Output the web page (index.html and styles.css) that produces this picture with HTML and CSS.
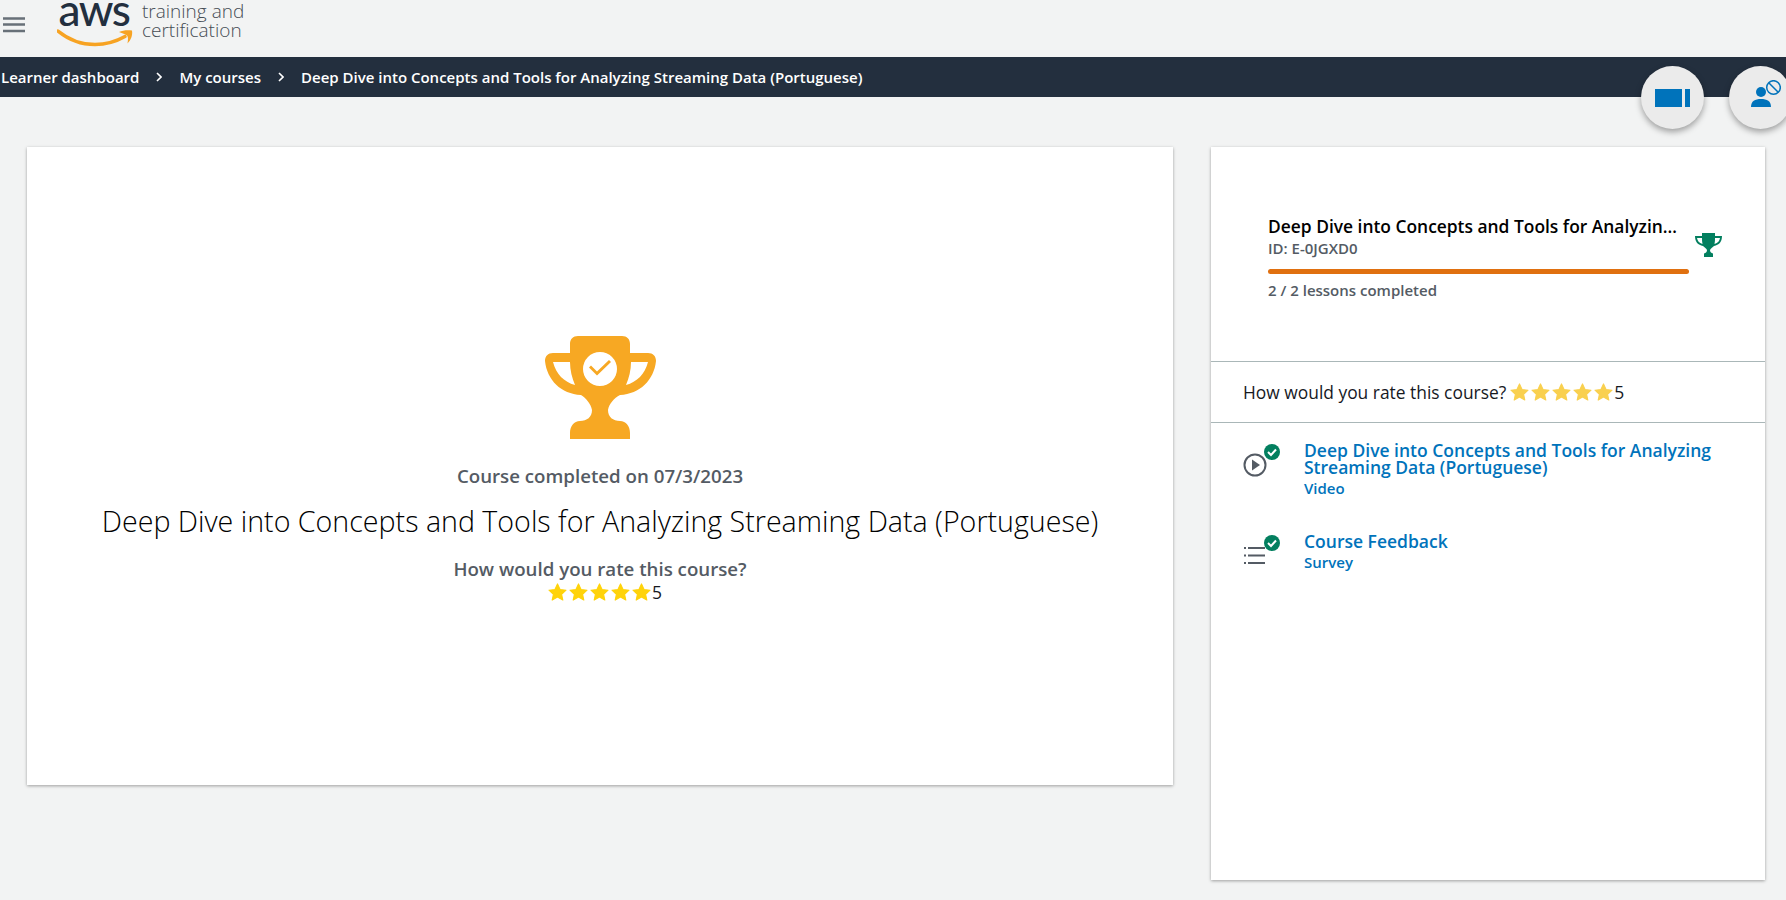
FILE: index.html
```html
<!DOCTYPE html>
<html lang="en">
<head>
    <meta charset="UTF-8">
    <title>Course completed</title>
    <link rel="stylesheet" href="styles.css">
</head>
<body>

<!-- star shape used by the ratings -->
<svg class="defs" width="0" height="0">
    <symbol id="star" viewBox="0 0 20 19">
        <path d="M10 1L12.700 6.900L19 7.600L14.300 11.900L15.600 18L10 14.900L4.400 18L5.700 11.900L1 7.600L7.300 6.900Z" stroke-width="1.200" stroke-linejoin="round"/>
    </symbol>
</svg>

<!-- top bar with logo -->
<header class="topbar">
    <svg class="menu-icon" viewBox="0 0 22 16" width="22" height="16">
        <path d="M0 1.500H22M0 7.500H22M0 14H22" stroke="#687078" stroke-width="2.400"/>
    </svg>
    <div class="logo">
        <span class="logo-word">aws</span>
        <svg class="logo-smile" viewBox="0 0 76 18" width="76" height="18">
            <path d="M1 2C12 11 25 15.500 38 15.500C50 15.500 60 12 68 7.500" fill="none" stroke="#f7a323" stroke-width="3.400" stroke-linecap="round"/>
            <path d="M62 3C66 1 71 .8 75 1.500C75.800 6 74 11 70.500 14.500C71 11 71.500 8 70 6.500C67.500 5 64.500 4 62 3Z" fill="#f7a323"/>
        </svg>
    </div>
    <div class="logo-text">training and<br>certification</div>
</header>

<!-- breadcrumb -->
<nav class="crumbs">
    <a>Learner dashboard</a>
    <svg class="chev" viewBox="0 0 6 10" width="6" height="10"><path d="M1 1L5 5L1 9" fill="none" stroke="#fff" stroke-width="1.600"/></svg>
    <a>My courses</a>
    <svg class="chev" viewBox="0 0 6 10" width="6" height="10"><path d="M1 1L5 5L1 9" fill="none" stroke="#fff" stroke-width="1.600"/></svg>
    <a>Deep Dive into Concepts and Tools for Analyzing Streaming Data (Portuguese)</a>
</nav>

<!-- floating round buttons -->
<button class="fab fab-video">
    <svg viewBox="0 0 35 18" width="35" height="18">
        <path d="M0 0H27V18H0ZM30 0H35V18H30Z" fill="#0073bb"/>
    </svg>
</button>
<button class="fab fab-user">
    <svg viewBox="0 0 30 27" width="30" height="27">
        <circle cx="10" cy="12" r="5" fill="#0073bb"/>
        <path d="M0 27C0 21 4 19 10 19C16 19 20 21 20 27Z" fill="#0073bb"/>
        <circle cx="22.500" cy="7.500" r="6.800" fill="#ebebeb" stroke="#0073bb" stroke-width="1.500"/>
        <path d="M18 3L27 12" stroke="#0073bb" stroke-width="1.500"/>
    </svg>
</button>

<main class="content">
    <section class="card done">
        <svg class="trophy" viewBox="0 0 111 103" width="111" height="103">
            <path fill="#f7a823" fill-rule="evenodd" d="M33 0H77C82 0 85 3 85 8V17H103C108 17 111 20 111 25C109 44 95 58 75 59C69 62 64 68 63 74C63 81 68 85 75 85C81 85 85 90 85 97V103H25V97C25 90 29 85 35 85C42 85 47 81 47 74C46 68 41 62 36 59C16 58 2 44 0 25C0 20 3 17 8 17H25V8C25 3 28 0 33 0ZM8 26C11 38 19 46 30 49C27 42 25 34 25 26ZM103 26H86C86 34 84 42 81 49C92 46 100 38 103 26ZM55 16A17 17 0 1 0 55 50A17 17 0 1 0 55 16ZM44 31.500L46 29.500L52 35.500L64 24L66 26L52 39.500Z"/>
        </svg>
        <p class="done-date">Course completed on 07/3/2023</p>
        <h1 class="done-title">Deep Dive into Concepts and Tools for Analyzing Streaming Data (Portuguese)</h1>
        <p class="done-ask">How would you rate this course?</p>
        <div class="rating rating-big">
            <svg class="star"><use href="#star"/></svg>
            <svg class="star"><use href="#star"/></svg>
            <svg class="star"><use href="#star"/></svg>
            <svg class="star"><use href="#star"/></svg>
            <svg class="star"><use href="#star"/></svg>
            <span class="num">5</span>
        </div>
    </section>

    <aside class="card side">
        <div class="side-head">
            <div class="side-info">
                <div class="side-title">Deep Dive into Concepts and Tools for Analyzing Streaming Data (Portuguese)</div>
                <div class="side-id">ID: E-0JGXD0</div>
                <div class="bar"></div>
                <div class="side-count">2 / 2 lessons completed</div>
            </div>
            <svg class="side-trophy" viewBox="0 0 27 24" width="27" height="24">
                <path fill="#037f5f" fill-rule="evenodd" d="M7 0H20V3H27C27 9 24 12 19 13C17.500 14.500 15.500 15.500 15 17C15 19 16 20 18 20.500V24H9V20.500C11 20 12 19 12 17C11.500 15.500 9.500 14.500 8 13C3 12 0 9 0 3H7ZM2 5C2.500 8 4 10 7.500 11C7 9 7 7 7 5ZM25 5H20C20 7 20 9 19.500 11C23 10 24.500 8 25 5Z"/>
            </svg>
        </div>
        <div class="side-rate">
            <span>How would you rate this course?</span>
            <div class="rating rating-small">
                <svg class="star"><use href="#star"/></svg>
                <svg class="star"><use href="#star"/></svg>
                <svg class="star"><use href="#star"/></svg>
                <svg class="star"><use href="#star"/></svg>
                <svg class="star"><use href="#star"/></svg>
                <span class="num">5</span>
            </div>
        </div>
        <ul class="lessons">
            <li class="lesson">
                <div class="lesson-icon">
                    <svg viewBox="0 0 24 24" width="24" height="24">
                        <circle cx="12" cy="12" r="10.500" fill="none" stroke="#545b64" stroke-width="2"/>
                        <path d="M9 6.500L17 12L9 17.500Z" fill="#545b64"/>
                    </svg>
                    <svg class="tick" viewBox="0 0 16 16" width="16" height="16">
                        <circle cx="8" cy="8" r="8" fill="#037f5f"/>
                        <path d="M4 8L7 11L12 5.500" fill="none" stroke="#fff" stroke-width="2"/>
                    </svg>
                </div>
                <a class="lesson-link">
                    <span class="lesson-name">Deep Dive into Concepts and Tools for Analyzing Streaming Data (Portuguese)</span>
                    <span class="lesson-type">Video</span>
                </a>
            </li>
            <li class="lesson">
                <div class="lesson-icon">
                    <svg viewBox="0 0 24 24" width="24" height="24">
                        <path d="M5 4H22M5 11.500H22M5 19H22" stroke="#545b64" stroke-width="2"/>
                        <path d="M1 4H3M1 11.500H3M1 19H3" stroke="#545b64" stroke-width="2"/>
                    </svg>
                    <svg class="tick" viewBox="0 0 16 16" width="16" height="16">
                        <circle cx="8" cy="8" r="8" fill="#037f5f"/>
                        <path d="M4 8L7 11L12 5.500" fill="none" stroke="#fff" stroke-width="2"/>
                    </svg>
                </div>
                <a class="lesson-link">
                    <span class="lesson-name">Course Feedback</span>
                    <span class="lesson-type">Survey</span>
                </a>
            </li>
        </ul>
    </aside>
</main>

</body>
</html>
```

FILE: styles.css
```css
* {
    margin: 0;
    padding: 0;
    box-sizing: border-box;
}

li {
    list-style: none;
}

html, body {
    height: 100%;
}

body {
    background: #f2f3f3;
    font-family: "Open Sans", "Liberation Sans", sans-serif;
    color: #16191f;
    overflow: hidden;
}

.defs {
    position: absolute;
}

/* top bar */
.topbar {
    height: 57px;
    display: flex;
    align-items: flex-start;
    overflow: hidden;
}

.menu-icon {
    margin: 17px 0 0 3px;
}

.logo {
    position: relative;
    width: 76px;
    height: 50px;
    margin-left: 32px;
}

.logo-word {
    display: block;
    font-family: Lato, sans-serif;
    font-weight: 500;
    font-size: 44px;
    line-height: 18px;
    letter-spacing: -1.500px;
    color: #232f3e;
    text-align: center;
    padding-right: 2px;
}

.logo-smile {
    position: absolute;
    left: 0;
    top: 29px;
}

.logo-text {
    margin-left: 9px;
    padding-top: 2px;
    font-weight: 300;
    font-size: 19px;
    line-height: 19px;
    color: #454c54;
}

/* breadcrumb */
.crumbs {
    height: 40px;
    background: #232f3e;
    display: flex;
    align-items: center;
    padding-left: 1px;
    gap: 17px;
    color: #fff;
    font-size: 15px;
    font-weight: 600;
}

.chev {
    flex: none;
}

/* round buttons */
.fab {
    position: absolute;
    top: 66px;
    width: 63px;
    height: 63px;
    border: 0;
    border-radius: 50%;
    background: #ebebeb;
    box-shadow: 0 3px 6px rgba(0, 0, 0, .35);
    display: flex;
    align-items: center;
    justify-content: center;
}

.fab-video {
    left: 1641px;
}

.fab-user {
    left: 1729px;
}

.fab-user svg {
    margin: -8px 0 0 10px;
}

/* cards */
.content {
    display: flex;
    align-items: flex-start;
    gap: 38px;
    padding: 50px 21px 0 27px;
}

.card {
    background: #fff;
    box-shadow: 0 1px 3px rgba(0, 0, 0, .35);
}

.done {
    width: 1146px;
    height: 638px;
    padding-top: 189px;
    display: flex;
    flex-direction: column;
    align-items: center;
    text-align: center;
}

.done-date {
    margin-top: 25px;
    font-size: 18.700px;
    line-height: 24px;
    font-weight: 600;
    color: #545b64;
}

.done-title {
    margin-top: 13px;
    font-size: 28.600px;
    line-height: 40px;
    font-weight: 300;
    color: #000;
}

.done-ask {
    margin-top: 16px;
    font-size: 18.700px;
    line-height: 24px;
    font-weight: 600;
    color: #545b64;
}

/* stars */
.rating {
    display: flex;
    align-items: center;
}

.star {
    width: 19px;
    height: 18px;
    margin-right: 2px;
    flex: none;
}

.num {
    margin-left: -1px;
    font-size: 17.500px;
    line-height: 22px;
    color: #16191f;
}

.rating-big {
    margin-left: 10px;
}

.rating-big .star {
    fill: #ffd30b;
    stroke: #ffd30b;
}

.rating-small .star {
    fill: #f9d04f;
    stroke: #f9d04f;
}

/* right panel */
.side {
    width: 554px;
    height: 733px;
}

.side-head {
    height: 215px;
    padding: 67px 43px 0 57px;
    display: flex;
    align-items: flex-start;
    gap: 6px;
    border-bottom: 1px solid #aab7b8;
}

.side-info {
    width: 421px;
}

.side-title {
    margin-right: 8px;
    font-size: 17.400px;
    line-height: 24px;
    font-weight: 600;
    color: #000;
    white-space: nowrap;
    overflow: hidden;
    text-overflow: ellipsis;
}

.side-id {
    font-size: 15px;
    line-height: 20px;
    font-weight: 600;
    color: #545b64;
}

.bar {
    height: 5px;
    margin-top: 11px;
    border-radius: 3px;
    background: #e07010;
}

.side-count {
    margin-top: 6px;
    font-size: 15px;
    line-height: 20px;
    font-weight: 600;
    color: #545b64;
}

.side-trophy {
    margin-top: 19px;
    flex: none;
}

.side-rate {
    height: 61px;
    padding-left: 32px;
    display: flex;
    align-items: center;
    gap: 4px;
    font-size: 17.400px;
    border-bottom: 1px solid #aab7b8;
}

.lessons {
    padding: 19px 32px 0;
}

.lesson {
    display: flex;
    margin-bottom: 35px;
}

.lesson-icon {
    position: relative;
    width: 61px;
    padding-top: 11px;
    flex: none;
}

.tick {
    position: absolute;
    left: 21px;
    top: 2px;
}

.lesson-link {
    display: flex;
    flex-direction: column;
    color: #0073bb;
}

.lesson-name {
    font-size: 17.500px;
    line-height: 17px;
    font-weight: 600;
}

.lesson-type {
    margin-top: 2px;
    font-size: 15px;
    line-height: 20px;
    font-weight: 600;
}
```
